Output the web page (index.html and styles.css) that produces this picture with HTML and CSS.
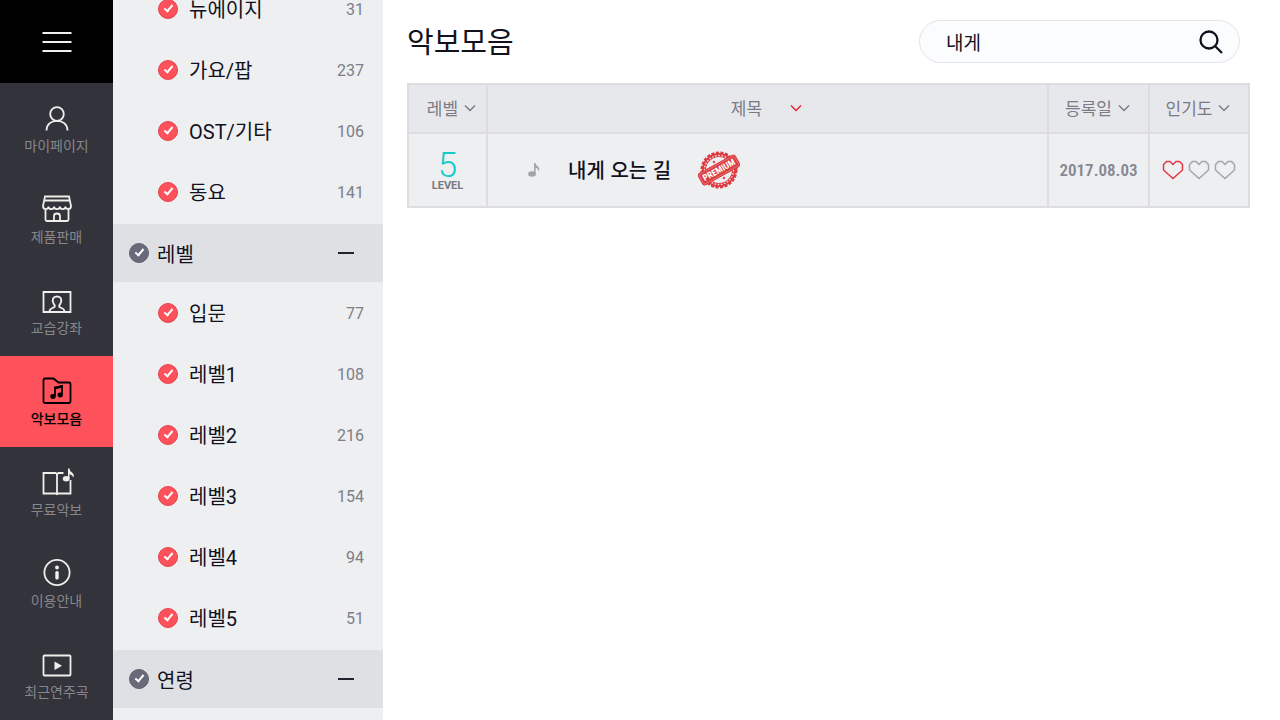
FILE: index.html
```
<!DOCTYPE html>
<html lang="ko">
<head>
    <meta charset="UTF-8">
    <meta name="viewport" content="width=device-width, initial-scale=1">
    <title>악보모음</title>
    <link rel="stylesheet" href="styles.css">
</head>
<body>
    <nav class="sidebar">
        <button class="menu-btn" type="button" aria-label="메뉴">
            <svg width="30" height="22" viewBox="0 0 30 22"><path d="M0.500 2h29M0.500 11h29M0.500 20h29"/></svg>
        </button>
        <a class="nav-item" href="#">
            <svg width="32" height="30" viewBox="0 0 32 30"><circle cx="16" cy="10" r="6.800"/><path d="M5.500 26.500c0-6 4.500-9.700 10.500-9.700s10.500 3.700 10.500 9.700"/></svg>
            <span>마이페이지</span>
        </a>
        <a class="nav-item" href="#">
            <svg width="32" height="30" viewBox="0 0 32 30"><path d="M4 1.500h24l2 9.500c0 4-5.500 4-5.500 0.500c0 3.500-5.600 3.500-5.600 0c0 3.500-5.800 3.500-5.800 0c0 3.500-5.600 3.500-5.600 0c0 3.500-5.500 3.500-5.500-0.500zM3.500 5.500h25M4.500 14v10.500q0 1.500 1.500 1.500h20q1.500 0 1.500-1.500v-10.500M13 26v-5q0-2.500 3-2.500t3 2.500v5"/></svg>
            <span>제품판매</span>
        </a>
        <a class="nav-item" href="#">
            <svg width="32" height="30" viewBox="0 0 32 30"><path d="M2.500 6h27v20h-27z"/><path d="M8.500 25.500c0-3 3-3.300 5-4.500c1-1 0-2-1-3.500c-1.800-4-0.500-7 3.500-7s5.300 3 3.500 7c-1 1.500-2 2.500-1 3.500c2 1.200 5 1.500 5 4.500"/></svg>
            <span>교습강좌</span>
        </a>
        <a class="nav-item active" href="#">
            <svg width="32" height="30" viewBox="0 0 32 30"><path d="M2.500 24.500v-21.500q0-1.500 1.500-1.500h8.500l5 4h10.500q1.500 0 1.500 1.500v17.500q0 1.500-1.500 1.500h-24q-1.500 0-1.500-1.500z"/><path d="M14 19v-8.500l7-1.500v8.500"/><path class="solid" d="M13.200 10l8.700-2v2.500l-8.700 2z"/><ellipse class="solid" cx="12" cy="19.500" rx="2.700" ry="2.400"/><ellipse class="solid" cx="19.200" cy="18" rx="2.700" ry="2.400"/></svg>
            <span>악보모음</span>
        </a>
        <a class="nav-item" href="#">
            <svg width="32" height="30" viewBox="0 0 32 30" overflow="visible"><path d="M22.500 5h-5l-1.500 1l-1.500-1h-12v20.500h12l1.500 0.700l1.500-0.700h12v-13.500M16 6v20"/><path class="solid" d="M27 0.500h1.500q0 2.500 2.500 4q2.500 2 1.500 5q-1-2.500-4-3.500v5h-1.500z"/><ellipse class="solid" cx="25.200" cy="10.700" rx="3.400" ry="2.700"/></svg>
            <span>무료악보</span>
        </a>
        <a class="nav-item" href="#">
            <svg width="32" height="30" viewBox="0 0 32 30"><circle cx="16" cy="13.500" r="12.600"/><circle class="solid" cx="16" cy="8.500" r="1.900"/><rect class="solid" x="14.300" y="12" width="3.400" height="8.500" rx="1.500"/></svg>
            <span>이용안내</span>
        </a>
        <a class="nav-item" href="#">
            <svg width="32" height="30" viewBox="0 0 32 30"><rect x="2.500" y="5.500" width="27" height="20" rx="1"/><path class="solid" d="M13.500 11.500l7.500 4.200l-7.500 4.200z"/></svg>
            <span>최근연주곡</span>
        </a>
    </nav>

    <aside class="filters">
        <ul class="filter-list first">
            <li><label><input type="checkbox" checked>뉴에이지</label><span>31</span></li>
            <li><label><input type="checkbox" checked>가요/팝</label><span>237</span></li>
            <li><label><input type="checkbox" checked>OST/기타</label><span>106</span></li>
            <li><label><input type="checkbox" checked>동요</label><span>141</span></li>
        </ul>
        <div class="filter-head">
            <label><input type="checkbox" checked>레벨</label>
            <button class="fold" type="button" aria-label="레벨 접기"></button>
        </div>
        <ul class="filter-list">
            <li><label><input type="checkbox" checked>입문</label><span>77</span></li>
            <li><label><input type="checkbox" checked>레벨1</label><span>108</span></li>
            <li><label><input type="checkbox" checked>레벨2</label><span>216</span></li>
            <li><label><input type="checkbox" checked>레벨3</label><span>154</span></li>
            <li><label><input type="checkbox" checked>레벨4</label><span>94</span></li>
            <li><label><input type="checkbox" checked>레벨5</label><span>51</span></li>
        </ul>
        <div class="filter-head">
            <label><input type="checkbox" checked>연령</label>
            <button class="fold" type="button" aria-label="연령 접기"></button>
        </div>
    </aside>

    <main>
        <header>
            <h1>악보모음</h1>
            <form class="search">
                <input type="text" value="내게" aria-label="악보 검색">
                <button type="button" aria-label="검색">
                    <svg width="26" height="26" viewBox="0 0 26 26"><circle cx="11" cy="11" r="8.500"/><path d="M17 17l7 7"/></svg>
                </button>
            </form>
        </header>

        <table class="scores">
            <thead>
                <tr>
                    <th class="col-level"><button type="button">레벨<svg width="12" height="8" viewBox="0 0 12 8"><path d="M1 1.500l5 5l5-5"/></svg></button></th>
                    <th><button class="sorted" type="button">제목<svg width="12" height="8" viewBox="0 0 12 8"><path d="M1 1.500l5 5l5-5"/></svg></button></th>
                    <th class="col-date"><button type="button">등록일<svg width="12" height="8" viewBox="0 0 12 8"><path d="M1 1.500l5 5l5-5"/></svg></button></th>
                    <th class="col-likes"><button type="button">인기도<svg width="12" height="8" viewBox="0 0 12 8"><path d="M1 1.500l5 5l5-5"/></svg></button></th>
                </tr>
            </thead>
            <tbody>
                <tr>
                    <td>
                        <div class="level"><b>5</b><small>LEVEL</small></div>
                    </td>
                    <td>
                        <div class="song">
                            <svg class="note" width="12" height="16" viewBox="0 0 12 16"><ellipse cx="4" cy="12" rx="3.900" ry="2.700"/><path d="M6 1h1.500q0 2 2.500 3.500q2.500 2.500 0.500 5q0-3-2.900-4v7h-1.600z"/></svg>
                            <a href="#">내게 오는 길</a>
                            <svg class="stamp" width="42" height="40" viewBox="1 0 42 40" role="img" aria-label="PREMIUM">
                                <circle class="teeth" cx="22" cy="20" r="17"/>
                                <circle class="ring" cx="22" cy="20" r="15"/>
                                <circle class="dots" cx="22" cy="20" r="14.500"/>
                                <path class="star" d="M17 10.500l1.500 1.500l-1.500 1.500l-1.500-1.500zM27 26.500l1.500 1.500l-1.500 1.500l-1.500-1.500z"/>
                                <g transform="rotate(-29 22 20)">
                                    <rect class="band" x="0.500" y="13" width="43" height="14" rx="3"/>
                                    <rect class="band-line" x="2" y="14.500" width="40" height="11" rx="1.500"/>
                                    <text x="22" y="23">PREMIUM</text>
                                </g>
                            </svg>
                        </div>
                    </td>
                    <td class="date">2017.08.03</td>
                    <td>
                        <div class="hearts">
                            <svg class="on" width="22" height="20" viewBox="0 0 22 20"><path d="M11 4.500l3-3h3.500l3 3v5.500l-9.500 8.500l-9.500-8.500v-5.500l3-3h3.500z"/></svg>
                            <svg width="22" height="20" viewBox="0 0 22 20"><path d="M11 4.500l3-3h3.500l3 3v5.500l-9.500 8.500l-9.500-8.500v-5.500l3-3h3.500z"/></svg>
                            <svg width="22" height="20" viewBox="0 0 22 20"><path d="M11 4.500l3-3h3.500l3 3v5.500l-9.500 8.500l-9.500-8.500v-5.500l3-3h3.500z"/></svg>
                        </div>
                    </td>
                </tr>
            </tbody>
        </table>
    </main>
</body>
</html>
```
FILE: styles.css
```
* {
    box-sizing: border-box;
}

body {
    margin: 0;
    display: flex;
    height: 100vh;
    overflow: hidden;
    font-family: Roboto, "Noto Sans CJK KR", sans-serif;
    color: #11121d;
    background: #fff;
}

button {
    border: 0;
    padding: 0;
    background: none;
    font: inherit;
    color: inherit;
    cursor: pointer;
}

svg {
    display: block;
    flex-shrink: 0;
    fill: none;
    stroke: currentColor;
}

/* left menu */
.sidebar {
    display: flex;
    flex-direction: column;
    width: 113px;
    flex-shrink: 0;
    background: #33333c;
}

.menu-btn {
    display: flex;
    align-items: center;
    justify-content: center;
    height: 83px;
    flex-shrink: 0;
    background: #000;
    color: #f0f1ec;
}

.menu-btn svg {
    stroke-width: 2;
}

.nav-item {
    display: flex;
    flex-direction: column;
    align-items: center;
    height: 91px;
    flex-shrink: 0;
    padding-top: 21px;
    gap: 2px;
    font-size: 14px;
    line-height: 20px;
    color: #87878a;
    text-decoration: none;
}

.nav-item svg {
    color: #eff0ec;
    stroke-width: 1.8;
}

.nav-item .solid {
    fill: currentColor;
    stroke: none;
}

.nav-item.active {
    background: #fd515b;
    color: #000;
    font-weight: 500;
}

.nav-item.active svg {
    color: #000;
}

/* filter panel */
.filters {
    width: 270px;
    flex-shrink: 0;
    overflow: hidden;
    background: #eeeff1;
    font-size: 20px;
}

.filter-list {
    list-style: none;
    margin: 0 0 2px;
    padding: 0 19px 0 45px;
}

.filter-list.first {
    margin-top: -22px;
}

.filter-list li {
    display: flex;
    align-items: center;
    justify-content: space-between;
    height: 61px;
}

.filter-list span {
    padding-top: 2px;
    font-size: 16px;
    color: #7d7e88;
}

.filters label {
    display: flex;
    align-items: center;
    gap: 11px;
}

.filters input {
    appearance: none;
    display: flex;
    justify-content: center;
    width: 20px;
    height: 20px;
    margin: 0;
    border: 1px solid #e2454f;
    border-radius: 50%;
    background: #fd515b;
}

.filters input:checked::after {
    content: "";
    width: 3px;
    height: 7px;
    margin-top: 3px;
    border: solid #fff;
    border-width: 0 2px 2px 0;
    transform: rotate(40deg);
}

.filter-head {
    display: flex;
    align-items: center;
    justify-content: space-between;
    height: 58px;
    padding: 0 29px 0 16px;
    background: #dfe0e4;
}

.filters .filter-head label {
    gap: 8px;
}

.filters .filter-head input {
    border-color: #606170;
    background: #686979;
}

.fold {
    width: 16px;
    height: 16px;
}

.fold::before {
    content: "";
    display: block;
    height: 2px;
    background: #22232c;
}

/* score list */
main {
    flex: 1;
    min-width: 0;
    padding: 0 30px 0 24px;
}

header {
    display: flex;
    align-items: center;
    justify-content: space-between;
    height: 83px;
    padding: 0 10px 0 0;
}

h1 {
    margin: 0 0 4px;
    font-size: 29px;
    font-weight: 400;
}

.search {
    display: flex;
    align-items: center;
    width: 321px;
    height: 43px;
    padding: 0 15px 0 26px;
    border: 1px solid #e3e4e7;
    border-radius: 22px;
    background: #fbfcfd;
}

.search input {
    flex: 1;
    min-width: 0;
    border: 0;
    padding: 0;
    outline: 0;
    background: none;
    font: inherit;
    font-size: 19px;
    color: inherit;
}

.search svg {
    stroke-width: 2.3;
}

.scores {
    width: 100%;
    table-layout: fixed;
    border-collapse: collapse;
    background: #eeeff1;
}

.scores th,
.scores td {
    padding: 0;
    border: 2px solid #dcdce1;
    text-align: center;
}

.scores th {
    height: 49px;
    padding: 0 2px 2px 0;
    background: #e7e8ec;
    font-size: 17px;
    font-weight: 400;
    color: #797b87;
}

.scores td {
    height: 74px;
}

.scores .col-level {
    width: 79px;
    padding-left: 10px;
}

.col-date {
    width: 101px;
}

.col-likes {
    width: 100px;
}

.scores th button {
    display: inline-flex;
    align-items: center;
    gap: 6px;
}

.scores th svg {
    stroke-width: 1.5;
}

.scores th .sorted {
    gap: 28px;
}

.sorted svg {
    color: #e5243b;
}

.level {
    display: flex;
    flex-direction: column;
    align-items: center;
}

.level b {
    font-size: 35px;
    font-weight: 300;
    line-height: 32px;
    color: #12cbcb;
}

.level small {
    font-size: 11px;
    font-weight: 700;
    line-height: 8px;
    color: #777983;
}

.song {
    display: flex;
    align-items: center;
    padding-left: 40px;
}

.note {
    fill: #a3a4ab;
    stroke: none;
}

.song a {
    margin: 0 27px 0 28px;
    font-family: "Noto Sans CJK KR", sans-serif;
    font-size: 20px;
    line-height: 28px;
    font-weight: 500;
    color: #11121d;
    text-decoration: none;
}

.stamp {
    color: #dc3b42;
}

.stamp .teeth {
    stroke-width: 3;
    stroke-dasharray: 3 1.5;
}

.stamp .ring {
    stroke-width: 4;
}

.stamp .dots {
    stroke: #fbe9ea;
    stroke-width: 1.3;
    stroke-dasharray: 1.6 1.6;
}

.stamp .star,
.stamp .band {
    fill: currentColor;
    stroke: none;
}

.stamp .band-line {
    stroke: #ef9a9d;
    stroke-width: 0.5;
}

.stamp text {
    fill: #fff;
    stroke: none;
    font-family: "Roboto Condensed", sans-serif;
    font-size: 9px;
    font-weight: 700;
    text-anchor: middle;
}

.scores .date {
    font-family: "Roboto Condensed", sans-serif;
    font-size: 17px;
    font-weight: 600;
    color: #868892;
}

.hearts {
    display: flex;
    justify-content: center;
    gap: 4px;
    color: #a4a5ad;
}

.hearts svg {
    stroke-width: 1.5;
}

.hearts .on {
    color: #e33a48;
}
```
